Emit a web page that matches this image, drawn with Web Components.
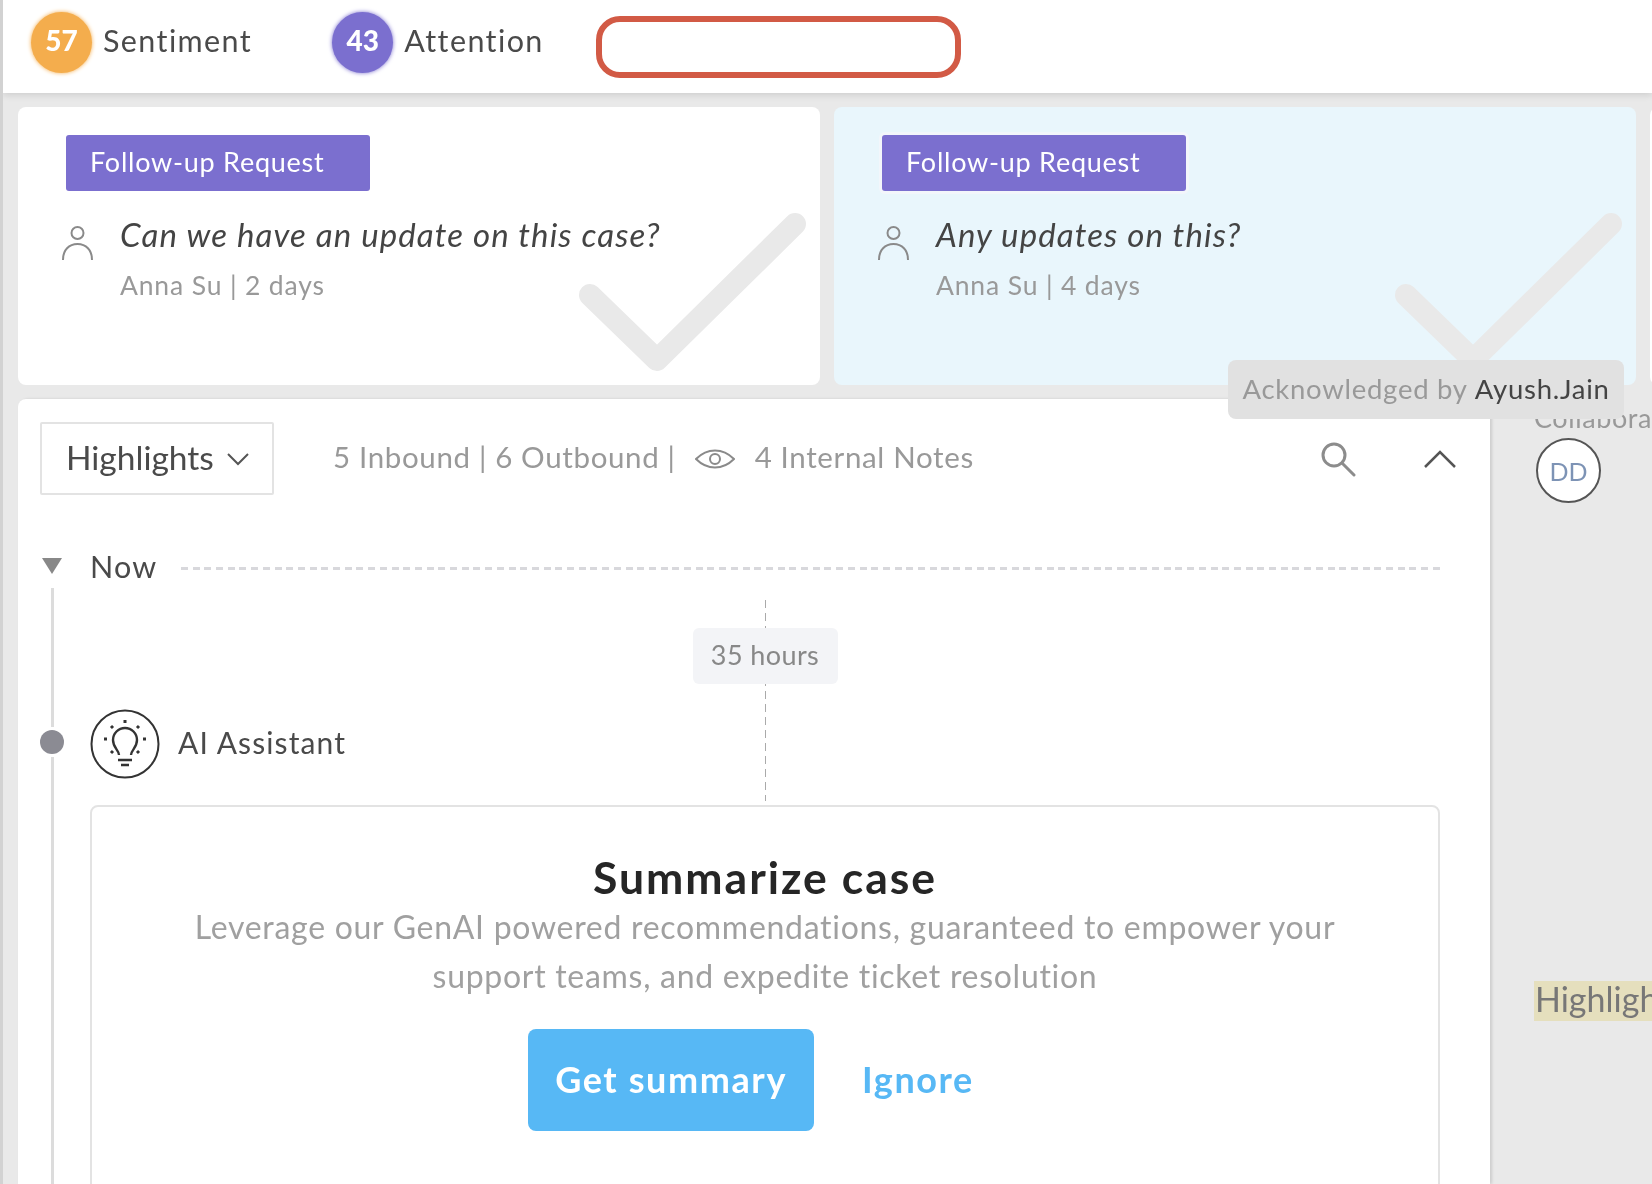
<!DOCTYPE html>
<html>
<head>
<meta charset="utf-8">
<title>Case</title>
<style>
    html, body { margin: 0; height: 100%; overflow: hidden; background: #e9e9e9; }
    body { font-family: Lato, "Open Sans", sans-serif; color: #444; }
</style>
</head>
<body>
<case-page></case-page>

<script>
(function() {

    class ScoreBadge extends HTMLElement {
        constructor() {
            super();
            const color = this.getAttribute('color')
            this.attachShadow({mode: 'open'}).innerHTML = `
                <style>
                    :host { display: flex; align-items: center; gap: 11px; font-size: 30.5px; letter-spacing: 1.4px; color: #4a4a4a; }
                    b {
                        width: 61px; height: 61px; border-radius: 50%; letter-spacing: 0;
                        display: flex; align-items: center; justify-content: center;
                        background: ${color}; box-shadow: 0 0 4px ${color};
                        color: #fff; font-size: 28px; font-weight: 900; padding-bottom: 6px; box-sizing: border-box;
                    }
                    span { padding-bottom: 6px; }
                </style>
                <b>${this.getAttribute('score')}</b><span><slot></slot></span>`
        }
    }

    class TopBar extends HTMLElement {
        constructor() {
            super();
            this.attachShadow({mode: 'open'}).innerHTML = `
                <style>
                    :host {
                        display: flex; align-items: flex-start; height: 93px; flex: none;
                        background: #fff; box-shadow: 0 2px 7px rgba(0,0,0,.12);
                        position: relative; z-index: 1; box-sizing: border-box; padding: 12px 0 0 28px;
                    }
                    score-badge:nth-of-type(2) { margin-left: 80px; }
                    i {
                        display: block; width: 365px; height: 62px; margin: 4px 0 0 52px;
                        border: 6px solid #d25a45; border-radius: 24px; box-sizing: border-box;
                    }
                </style>
                <score-badge score="57" color="#f4ad4d">Sentiment</score-badge>
                <score-badge score="43" color="#7b6fcf">Attention</score-badge>
                <i></i>`
        }
    }

    class FollowCard extends HTMLElement {
        constructor() {
            super();
            const tint = this.hasAttribute('tint')
            this.attachShadow({mode: 'open'}).innerHTML = `
                <style>
                    :host {
                        display: block; position: relative; flex: none; width: 802px; height: 278px; overflow: hidden;
                        box-sizing: border-box; padding: 28px 0 0 43px; border-radius: 8px;
                        background: ${tint ? '#e9f6fc' : '#fff'};
                    }
                    .tag {
                        width: 304px; height: 56px; margin-left: 5px; box-sizing: border-box; padding: 0 0 4px 24px;
                        display: flex; align-items: center; background: #7b6fcf; border-radius: 3px;
                        color: #fff; font-size: 27px; letter-spacing: .75px; ${tint ? 'box-shadow: 0 0 0 3px #f3f6fb;' : ''}
                    }
                    .row { display: grid; grid-template-columns: 59px 1fr; margin-top: 22px; }
                    svg.person { margin-top: 12px; }
                    em { font-size: 33px; letter-spacing: 1.1px; color: #444; display: block; line-height: 40px; white-space: nowrap; padding-top: 1px; }
                    small { font-size: 26.5px; letter-spacing: .85px; color: #999; display: block; line-height: 32px; margin-top: 15px; }
                    svg.check { position: absolute; left: 556px; top: 100px; }
                </style>
                <div class="tag">Follow-up Request</div>
                <div class="row">
                    <svg class="person" width="33" height="36" viewBox="0 0 33 36" fill="none" stroke="#8a8a8a" stroke-width="2">
                        <circle cx="16.5" cy="8" r="6"/>
                        <path d="M2 35c0-10 6-16 14.5-16S31 25 31 35"/>
                    </svg>
                    <div><em><slot></slot></em><small>${this.getAttribute('by')}</small></div>
                </div>
                <svg class="check" width="240" height="175" viewBox="0 0 240 175" fill="none" stroke="#e9e9e9" stroke-width="22" stroke-linecap="round" stroke-linejoin="round">
                    <path d="M16 88L83 153L221 17"/>
                </svg>`
        }
    }

    class PanelHeader extends HTMLElement {
        constructor() {
            super();
            this.attachShadow({mode: 'open'}).innerHTML = `
                <style>
                    :host { display: flex; align-items: center; height: 73px; font-size: 29.5px; letter-spacing: .65px; color: #999; white-space: nowrap; }
                    span { padding-bottom: 4px; }
                    .select {
                        width: 234px; height: 73px; box-sizing: border-box; border: 2px solid #e3e3e3; border-radius: 2px;
                        display: flex; align-items: center; gap: 12px; padding: 0 0 0 24px; font-size: 33.5px; letter-spacing: 0; color: #4a4a4a;
                    }
                    .select b { font-weight: 400; padding-bottom: 4px; }
                    .counts { margin-left: 59px; }
                    .eye { margin-left: 19px; }
                    .notes { margin-left: 20px; }
                    .search { margin-left: auto; }
                    .up { margin: 0 34px 0 68px; }
                </style>
                <div class="select"><b>Highlights</b>
                    <svg width="24" height="14" viewBox="0 0 24 14" fill="none" stroke="#555" stroke-width="2"><path d="M2 2l10 10L22 2"/></svg>
                </div>
                <span class="counts">5 Inbound | 6 Outbound |</span>
                <svg class="eye" width="40" height="20" viewBox="0 0 40 20" fill="none" stroke="#8a8a8a" stroke-width="2">
                    <path d="M1 10C7 4 13 1.500 20 1.500S33 4 39 10C33 16 27 18.500 20 18.500S7 16 1 10Z"/>
                    <circle cx="20" cy="10" r="5"/>
                </svg>
                <span class="notes">4 Internal Notes</span>
                <svg class="search" width="36" height="36" viewBox="0 0 36 36" fill="none" stroke="#8c8c8c" stroke-width="3">
                    <circle cx="14" cy="14" r="11"/><path d="M22 22l12 12" stroke-linecap="round"/>
                </svg>
                <svg class="up" width="32" height="20" viewBox="0 0 32 20" fill="none" stroke="#555" stroke-width="2.500"><path d="M1 18L16 3l15 15"/></svg>`
        }
    }

    class SummaryCard extends HTMLElement {
        constructor() {
            super();
            this.attachShadow({mode: 'open'}).innerHTML = `
                <style>
                    :host {
                        display: block; box-sizing: border-box; height: 420px; padding-top: 45px; text-align: center;
                        border: 2px solid #e3e3e3; border-radius: 8px; background: #fff;
                    }
                    h2 { margin: 0; font-size: 44.5px; line-height: 50px; font-weight: 700; color: #262626; letter-spacing: 2px; }
                    p { margin: 0; font-size: 32px; letter-spacing: .71px; line-height: 49px; color: #a0a0a0; }
                    .actions { display: flex; justify-content: center; align-items: center; margin-top: 29px; font-size: 36px; letter-spacing: 1.6px; font-weight: 700; }
                    .go {
                        width: 286px; height: 102px; display: flex; align-items: center; justify-content: center;
                        background: #57b8f5; color: #fff; border-radius: 8px; padding-bottom: 3px; box-sizing: border-box;
                    }
                    .skip { color: #57b8f5; padding: 0 28px 3px; margin-left: 20px; }
                </style>
                <h2>Summarize case</h2>
                <p>Leverage our GenAI powered recommendations, guaranteed to empower your<br>support teams, and expedite ticket resolution</p>
                <div class="actions"><div class="go">Get summary</div><div class="skip">Ignore</div></div>`
        }
    }

    class CaseTimeline extends HTMLElement {
        constructor() {
            super();
            this.attachShadow({mode: 'open'}).innerHTML = `
                <style>
                    :host { display: grid; grid-template-columns: 24px 1350px; column-gap: 26px; margin-top: 55px; }
                    .rail { display: flex; flex-direction: column; align-items: center; height: 640px; padding-top: 8px; box-sizing: border-box; }
                    .tri { width: 0; height: 0; border: 10px solid transparent; border-top: 16px solid #888; border-bottom: 0; }
                    .line { width: 3px; background: #dcdcdc; }
                    .dot { width: 24px; height: 24px; border-radius: 50%; background: #8b8b93; margin: 3px 0; flex: none; }
                    .now { display: flex; align-items: center; height: 34px; gap: 24px; font-size: 30.5px; letter-spacing: 1.2px; color: #4a4a4a; }
                    .now span { padding-bottom: 2px; }
                    .now i { flex: 1; height: 3px; margin-top: 2px; background: repeating-linear-gradient(90deg, #d8d8dc 0 7px, transparent 7px 11.7px); }
                    .gap { display: grid; height: 221px; }
                    .connector {
                        grid-area: 1 / 1; justify-self: center; margin-top: 16px; width: 1px; height: 201px;
                        background: repeating-linear-gradient(180deg, #aaa 0 8px, transparent 8px 13px);
                    }
                    .pill {
                        width: 145px; height: 56px; margin: 28px 0 0 -72px; background: #f3f4f7; border-radius: 6px; padding-bottom: 3px; box-sizing: border-box;
                        display: flex; align-items: center; justify-content: center; font-size: 27px; letter-spacing: .4px; color: #888;
                    }
                    .ai {
                        grid-area: 1 / 1; align-self: start; justify-self: start; margin-top: 125px; height: 70px;
                        display: flex; align-items: center; gap: 18px; font-size: 30px; letter-spacing: 1.1px; color: #4a4a4a;
                    }
                    .ai span { padding-bottom: 5px; }
                </style>
                <div class="rail">
                    <div class="tri"></div>
                    <div class="line" style="height: 139px; margin-top: 14px"></div>
                    <div class="dot"></div>
                    <div class="line" style="flex: 1"></div>
                </div>
                <div>
                    <div class="now"><span>Now</span><i></i></div>
                    <div class="gap">
                        <div class="connector"><div class="pill">35 hours</div></div>
                        <div class="ai">
                            <svg width="70" height="70" viewBox="0 0 70 70" fill="none" stroke="#333" stroke-width="2.400">
                                <circle cx="35" cy="35" r="33.500" stroke-width="2"/>
                                <path d="M29 46c0-5-6-7-6-15a12 12 0 0 1 24 0c0 8-6 10-6 15"/>
                                <path d="M28 51h14M31 56h8"/>
                                <path d="M35 11v3M21 17l2 2M49 17l-2 2M14 30h3M53 30h3M21 44l2-2M49 44l-2-2" stroke-width="3"/>
                            </svg>
                            <span>AI Assistant</span>
                        </div>
                    </div>
                    <summary-card></summary-card>
                </div>`
        }
    }

    class SidePane extends HTMLElement {
        constructor() {
            super();
            this.attachShadow({mode: 'open'}).innerHTML = `
                <style>
                    :host { display: block; flex: 1; min-width: 0; overflow: hidden; padding-left: 44px; font-size: 27px; letter-spacing: .6px; color: #999; white-space: nowrap; }
                    .label { line-height: 30px; margin-top: 4px; }
                    .dd {
                        width: 65px; height: 65px; box-sizing: border-box; border-radius: 50%; background: #fff;
                        border: 2px solid #555; margin: 5px 0 0 2px; display: flex; align-items: center; justify-content: center;
                        font-size: 25px; letter-spacing: 0; color: #7d93b5;
                    }
                    .mark { display: inline-block; margin-top: 478px; background: #e5dfbd; color: #777; font-size: 34px; letter-spacing: 0; height: 40px; line-height: 36px; padding-left: 1px; }
                </style>
                <div class="label">Collaborators</div>
                <div class="dd">DD</div>
                <span class="mark">Highlights</span>`
        }
    }

    class CasePage extends HTMLElement {
        constructor() {
            super();
            this.attachShadow({mode: 'open'}).innerHTML = `
                <style>
                    :host {
                        display: flex; flex-direction: column; position: relative; overflow: hidden;
                        width: 1652px; height: 1184px; box-sizing: border-box;
                        border-left: 3px solid #d2d2d2; background: #e9e9e9;
                        filter: blur(.45px);
                    }
                    .cards { display: flex; gap: 14px; padding: 14px 0 0 15px; flex: none; }
                    .third { flex: none; width: 60px; height: 278px; background: #fff; border-radius: 8px; }
                    .lower { display: flex; flex: 1; min-height: 0; margin-top: 14px; padding-left: 15px; }
                    .panel {
                        flex: none; width: 1472px; box-sizing: border-box; padding: 23px 0 0 22px;
                        background: #fff; border-radius: 8px 0 0 0; box-shadow: 2px 0 3px rgba(0,0,0,.12);
                    }
                    .ack {
                        position: absolute; left: 1225px; top: 360px; width: 396px; height: 59px; padding-bottom: 2px; box-sizing: border-box;
                        display: flex; align-items: center; justify-content: center; white-space: pre;
                        background: #e1e1e1; border-radius: 8px; font-size: 27.5px; letter-spacing: .73px; color: #999;
                    }
                    .ack b { font-weight: 400; color: #444; }
                </style>
                <top-bar></top-bar>
                <div class="cards">
                    <follow-card by="Anna Su | 2 days">Can we have an update on this case?</follow-card>
                    <follow-card tint by="Anna Su | 4 days">Any updates on this?</follow-card>
                    <div class="third"></div>
                </div>
                <div class="lower">
                    <section class="panel">
                        <panel-header></panel-header>
                        <case-timeline></case-timeline>
                    </section>
                    <side-pane></side-pane>
                </div>
                <div class="ack">Acknowledged by <b>Ayush.Jain</b></div>`
        }
    }

    window.customElements.define('score-badge', ScoreBadge)
    window.customElements.define('top-bar', TopBar)
    window.customElements.define('follow-card', FollowCard)
    window.customElements.define('panel-header', PanelHeader)
    window.customElements.define('summary-card', SummaryCard)
    window.customElements.define('case-timeline', CaseTimeline)
    window.customElements.define('side-pane', SidePane)
    window.customElements.define('case-page', CasePage)
}())
</script>
</body>
</html>
